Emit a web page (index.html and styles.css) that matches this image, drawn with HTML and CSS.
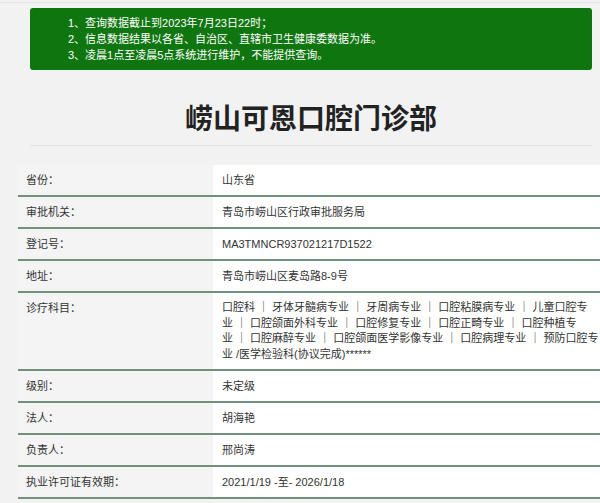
FILE: index.html
```html
<!DOCTYPE html>
<html lang="zh-CN">
<head>
<meta charset="utf-8">
<title>崂山可恩口腔门诊部</title>
<link rel="stylesheet" href="styles.css">
</head>
<body>
<div class="page">
  <div class="topline"></div>
  <div class="inner">
    <div class="notice">
      <p>1、查询数据截止到2023年7月23日22时；</p>
      <p>2、信息数据结果以各省、自治区、直辖市卫生健康委数据为准。</p>
      <p>3、凌晨1点至凌晨5点系统进行维护，不能提供查询。</p>
    </div>
    <h1 class="title">崂山可恩口腔门诊部</h1>
    <div class="rule"></div>
  </div>
  <table class="info">
    <tr><td class="label">省份：</td><td class="value">山东省</td></tr>
    <tr><td class="label">审批机关：</td><td class="value">青岛市崂山区行政审批服务局</td></tr>
    <tr><td class="label">登记号：</td><td class="value">MA3TMNCR937021217D1522</td></tr>
    <tr><td class="label">地址：</td><td class="value">青岛市崂山区麦岛路8-9号</td></tr>
    <tr><td class="label">诊疗科目：</td><td class="value multi">
      <span class="ln">口腔科 ｜ 牙体牙髓病专业 ｜ 牙周病专业 ｜ 口腔粘膜病专业 ｜ 儿童口腔专</span>
      <span class="ln">业 ｜ 口腔颌面外科专业 ｜ 口腔修复专业 ｜ 口腔正畸专业 ｜ 口腔种植专</span>
      <span class="ln">业 ｜ 口腔麻醉专业 ｜ 口腔颌面医学影像专业 ｜ 口腔病理专业 ｜ 预防口腔专</span>
      <span class="ln">业 /医学检验科(协议完成)******</span>
    </td></tr>
    <tr><td class="label">级别：</td><td class="value">未定级</td></tr>
    <tr><td class="label">法人：</td><td class="value">胡海艳</td></tr>
    <tr><td class="label">负责人：</td><td class="value">邢尚涛</td></tr>
    <tr><td class="label">执业许可证有效期：</td><td class="value">2021/1/19 -至- 2026/1/18</td></tr>
  </table>
</div>
</body>
</html>
```
FILE: styles.css
```css
html, body {
  margin: 0;
  padding: 0;
  background: #f2f2f2;
  overflow: hidden;
}
body {
  font-family: "Liberation Sans", "Noto Sans CJK SC", sans-serif;
  font-size: 11px;
  color: #333;
}
.page {
  width: 600px;
  height: 503px;
  overflow: hidden;
}
.topline {
  height: 2px;
  border-bottom: 1px solid #e6e6e6;
}
.inner {
  margin: 5px 8px 0 30px;
  width: 562px;
}
.notice {
  background: #0f760f;
  border-radius: 3px;
  padding: 7px 0 7px 38px;
  color: #fff;
}
.notice p {
  margin: 0;
  line-height: 16px;
  font-size: 11px;
}
.title {
  margin: 27px 0 0;
  text-align: center;
  font-family: "Noto Sans CJK SC", sans-serif;
  font-size: 28px;
  font-weight: bold;
  line-height: 40px;
  color: #222;
}
.rule {
  margin-top: 8px;
  height: 1px;
  background: #e4e4e4;
}
.info {
  margin: 19px 0 0 18px;
  width: 590px;
  border-collapse: collapse;
  table-layout: fixed;
}
.info td {
  border-bottom: 2px solid #72907f;
  padding: 7px 9px 7px 8px;
  line-height: 16px;
  vertical-align: top;
}
.info .label {
  width: 178px;
  background: #f4f4f4;
  color: #333;
}
.info .value {
  background: #fff;
  padding-left: 9px;
}
.info .multi {
  padding-top: 7px;
  padding-bottom: 7px;
}
.ln {
  display: block;
  white-space: nowrap;
  line-height: 15.5px;
}
```
